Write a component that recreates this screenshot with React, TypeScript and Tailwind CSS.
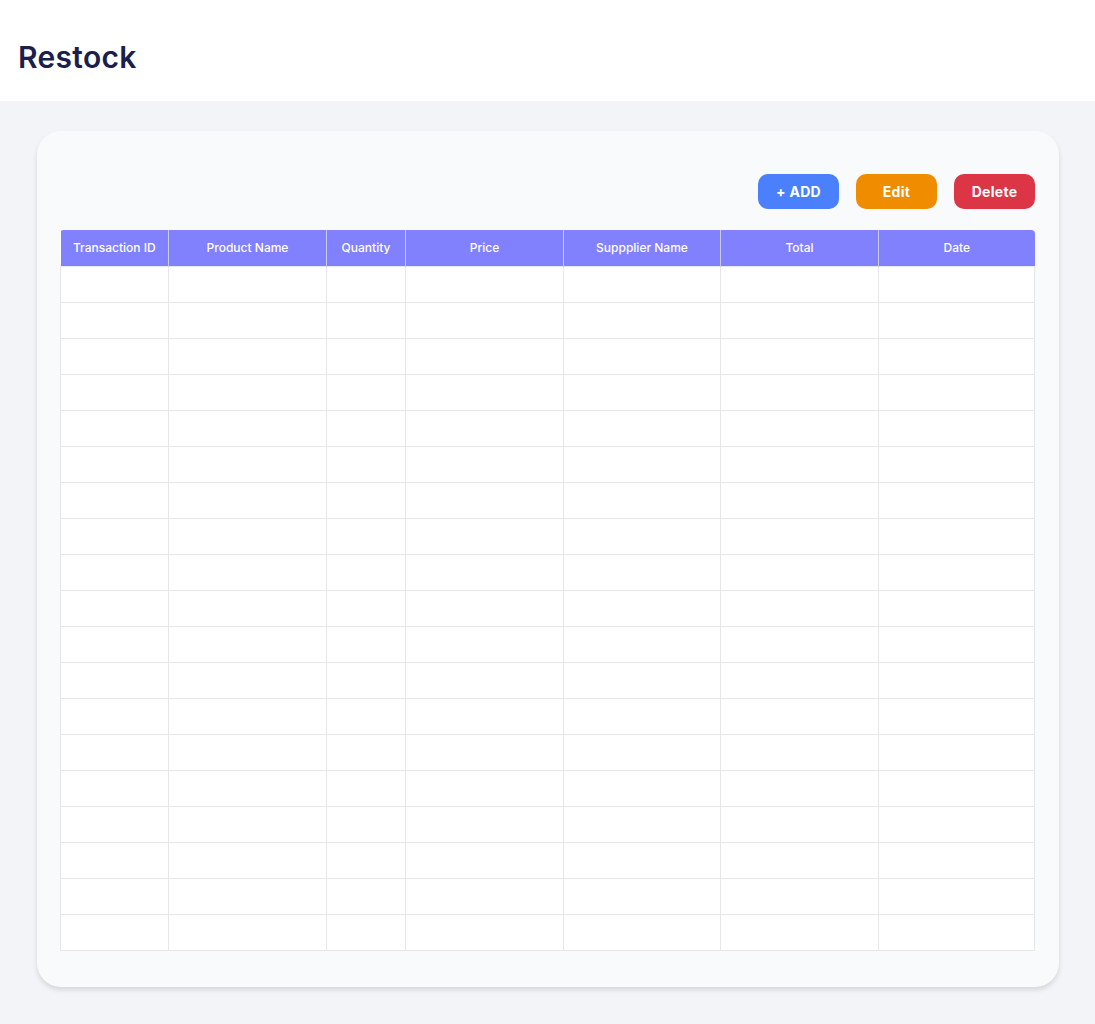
import React from 'react';

const columns = [
  { label: 'Transaction ID', w: 'w-[108px]' },
  { label: 'Product Name', w: 'w-[158px]' },
  { label: 'Quantity', w: 'w-[79px]' },
  { label: 'Price', w: 'w-[158px]' },
  { label: 'Suppplier Name', w: 'w-[157px]' },
  { label: 'Total', w: 'w-[158px]' },
  { label: 'Date', w: 'w-[156px]' },
];

const rows = Array.from({ length: 19 }, (_, i) => i);

export default function App() {
  return (
    <div className="min-h-screen bg-[#f3f4f8] font-['Inter',sans-serif]">
      <header className="h-[101px] bg-white flex items-center px-[18px]">
        <h1 className="text-[30px] font-semibold text-[#1b1f4b] tracking-[0.3px] pt-[14px]">Restock</h1>
      </header>

      <main className="pt-[30px] pl-[37px] pr-[36px] pb-[38px]">
        <div className="bg-[#f9fafb] rounded-[24px] shadow-[0_3px_5px_rgba(0,0,0,0.12)] pt-[43px] pl-[23px] pr-[24px] pb-[36px]">
          <div className="flex justify-end gap-[17px] mb-[21px]">
            <button className="w-[81px] h-[35px] rounded-[10px] bg-[#4a80fb] text-white text-[14px] font-bold tracking-[0.3px]">
              + ADD
            </button>
            <button className="w-[81px] h-[35px] rounded-[10px] bg-[#f08c00] text-white text-[14px] font-bold tracking-[0.3px]">
              Edit
            </button>
            <button className="w-[81px] h-[35px] rounded-[10px] bg-[#dc3545] text-white text-[14px] font-bold tracking-[0.3px]">
              Delete
            </button>
          </div>

          <table className="border-collapse bg-white rounded-t-[4px] overflow-hidden">
            <thead>
              <tr className="bg-[#8181fd]">
                {columns.map((c, i) => (
                  <th
                    key={c.label}
                    className={`${c.w} h-[36px] p-0 text-[12px] font-medium text-white text-center ${
                      i > 0 ? 'border-l border-[#c9c9fb]' : ''
                    }`}
                  >
                    {c.label}
                  </th>
                ))}
              </tr>
            </thead>
            <tbody>
              {rows.map((r) => (
                <tr key={r}>
                  {columns.map((c) => (
                    <td key={c.label} className="h-[36px] p-0 border border-[#e5e7eb]" />
                  ))}
                </tr>
              ))}
            </tbody>
          </table>
        </div>
      </main>
    </div>
  );
}
